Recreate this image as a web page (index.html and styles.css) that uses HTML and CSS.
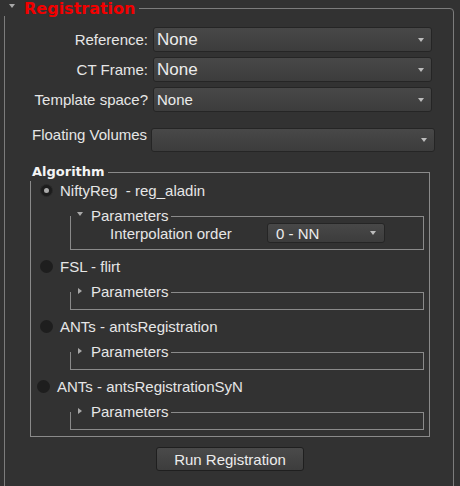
FILE: index.html
```html
<!DOCTYPE html>
<html lang="en">
<head>
<meta charset="utf-8">
<title>Registration</title>
<link rel="stylesheet" href="styles.css">
</head>
<body>
<fieldset class="group main">
  <legend class="main-title"><span class="tri-down tri-main"></span><span class="main-title-text">Registration</span></legend>

  <div class="form-grid">
    <label class="field-label">Reference:</label>
    <div class="combo combo-row combo-big"><span class="combo-text">None</span><span class="combo-arrow"></span></div>
    <label class="field-label">CT Frame:</label>
    <div class="combo combo-row combo-big"><span class="combo-text">None</span><span class="combo-arrow"></span></div>
    <label class="field-label">Template space?</label>
    <div class="combo combo-row"><span class="combo-text">None</span><span class="combo-arrow"></span></div>
  </div>

  <div class="floating-row">
    <label class="floating-label">Floating Volumes</label>
    <div class="combo combo-floating"><span class="combo-text"></span><span class="combo-arrow"></span></div>
  </div>

  <fieldset class="group algo">
    <legend class="algo-title">Algorithm</legend>

    <div class="radio-row">
      <span class="radio checked"></span><span class="radio-text">NiftyReg &nbsp;- reg_aladin</span>
    </div>
    <fieldset class="group params params-open">
      <legend class="params-title"><span class="tri-down tri-small"></span>Parameters</legend>
      <div class="interp-row">
        <span class="interp-label">Interpolation order</span>
        <div class="combo combo-interp"><span class="combo-text">0 - NN</span><span class="combo-arrow"></span></div>
      </div>
    </fieldset>

    <div class="radio-row">
      <span class="radio"></span><span class="radio-text">FSL - flirt</span>
    </div>
    <fieldset class="group params params-closed">
      <legend class="params-title"><span class="tri-right"></span>Parameters</legend>
    </fieldset>

    <div class="radio-row">
      <span class="radio"></span><span class="radio-text">ANTs - antsRegistration</span>
    </div>
    <fieldset class="group params params-closed">
      <legend class="params-title"><span class="tri-right"></span>Parameters</legend>
    </fieldset>

    <div class="radio-row radio-row-syn">
      <span class="radio"></span><span class="radio-text">ANTs - antsRegistrationSyN</span>
    </div>
    <fieldset class="group params params-closed">
      <legend class="params-title"><span class="tri-right"></span>Parameters</legend>
    </fieldset>
  </fieldset>

  <div class="actions">
    <button class="btn" type="button">Run Registration</button>
  </div>
</fieldset>
</body>
</html>
```

FILE: styles.css
```css
html, body {
  margin: 0;
  padding: 0;
  background: #323232;
}

body {
  height: 486px;
  overflow: hidden;
  font-family: "Liberation Sans", Arial, sans-serif;
  font-size: 15px;
  color: #e6e6e6;
}

.group {
  margin: 0;
  padding: 0;
  border: 1px solid #8a8a8a;
  min-inline-size: 0;
}

.main {
  margin: 0 6px 0 4px;
  padding: 0 0 40px 0;
  border-color: #7c7c7c;
  border-radius: 0 4px 0 0;
}

.main-title {
  margin-left: -1px;
  padding: 0 4px 0 5px;
  font-family: "DejaVu Sans", sans-serif;
  font-weight: bold;
  font-size: 16px;
  line-height: 16px;
  color: #f20000;
}

.main-title-text {
  position: relative;
  top: 1px;
}

.tri-down {
  display: inline-block;
  width: 0;
  height: 0;
  border-left: 3.5px solid transparent;
  border-right: 3.5px solid transparent;
  border-top: 4px solid #a8a8a8;
  vertical-align: middle;
}

.tri-main {
  margin-right: 9px;
  position: relative;
  top: -3px;
}

.tri-small {
  border-left-width: 3.5px;
  border-right-width: 3.5px;
  margin-right: 8px;
  position: relative;
  top: -3px;
}

.tri-right {
  display: inline-block;
  width: 0;
  height: 0;
  border-top: 3.5px solid transparent;
  border-bottom: 3.5px solid transparent;
  border-left: 4px solid #a8a8a8;
  margin-left: 1px;
  margin-right: 9px;
  vertical-align: middle;
  position: relative;
  top: -2px;
}

/* form rows */
.form-grid {
  display: grid;
  grid-template-columns: 143px 279px;
  grid-auto-rows: 25px;
  column-gap: 5px;
  row-gap: 5px;
  align-items: center;
  margin-top: 11px;
}

.field-label {
  text-align: right;
  white-space: nowrap;
  line-height: 18px;
}

.combo {
  box-sizing: border-box;
  display: flex;
  align-items: center;
  justify-content: space-between;
  border: 1px solid #252525;
  border-radius: 3px;
  background: linear-gradient(#484848, #3c3c3c);
  color: #ececec;
}

.combo-row {
  height: 25px;
  padding: 0 7px 0 3px;
}

.combo-big .combo-text {
  font-size: 17px;
}

.combo-arrow {
  width: 0;
  height: 0;
  border-left: 3.5px solid transparent;
  border-right: 3.5px solid transparent;
  border-top: 4px solid #bdbdbd;
}

.floating-row {
  display: flex;
  align-items: flex-start;
  margin: 16px 0 0 27px;
}

.floating-label {
  width: 119px;
  line-height: 16px;
  margin-top: -1px;
  white-space: nowrap;
}

.combo-floating {
  width: 284px;
  height: 24px;
  padding: 0 7px 0 4px;
}

/* algorithm group */
.algo {
  margin: 11px 23px 0 25px;
  padding: 0 0 6px 0;
}

.algo-title {
  margin-left: -1px;
  padding: 0 3px 0 2px;
  font-family: "DejaVu Sans", sans-serif;
  font-weight: bold;
  font-size: 13px;
  line-height: 18px;
  color: #f4f4f4;
}

.radio-row {
  display: flex;
  align-items: center;
  height: 18px;
  padding-left: 9px;
  gap: 7px;
  white-space: nowrap;
}

.radio-row + .params {
  margin-top: 10px;
}

.params + .radio-row {
  margin-top: 7px;
}

.radio-row-syn {
  padding-left: 6px;
}

.radio {
  box-sizing: border-box;
  width: 13px;
  height: 13px;
  border-radius: 50%;
  background: #1e1e1e;
  display: flex;
  align-items: center;
  justify-content: center;
  flex: none;
}

.radio.checked {
  background: #1c1c1c;
  border: 1px solid #2a2a2a;
}

.radio.checked::after {
  content: "";
  width: 5px;
  height: 5px;
  border-radius: 50%;
  background: #a9a9a9;
}

.params {
  margin: 0 5px 0 39px;
}

.params-title {
  padding: 0 2px 0 6px;
  line-height: 14px;
  white-space: nowrap;
}

.params-open {
  padding-bottom: 6px;
}

.params-closed {
  padding-bottom: 10px;
}

.interp-row {
  display: flex;
  align-items: center;
  margin-left: 39px;
  height: 20px;
}

.interp-label {
  width: 157px;
  white-space: nowrap;
}

.combo-interp {
  width: 118px;
  height: 20px;
  padding: 0 8px 0 8px;
}

/* action button */
.actions {
  display: flex;
  justify-content: center;
  margin-top: 10px;
  padding-left: 2px;
}

.btn {
  box-sizing: border-box;
  width: 148px;
  height: 24px;
  padding: 0;
  border: 1px solid #1f1f1f;
  border-radius: 3px;
  background: linear-gradient(#4a4a4a, #3d3d3d);
  color: #ececec;
  font-family: "Liberation Sans", Arial, sans-serif;
  font-size: 15px;
}
```
